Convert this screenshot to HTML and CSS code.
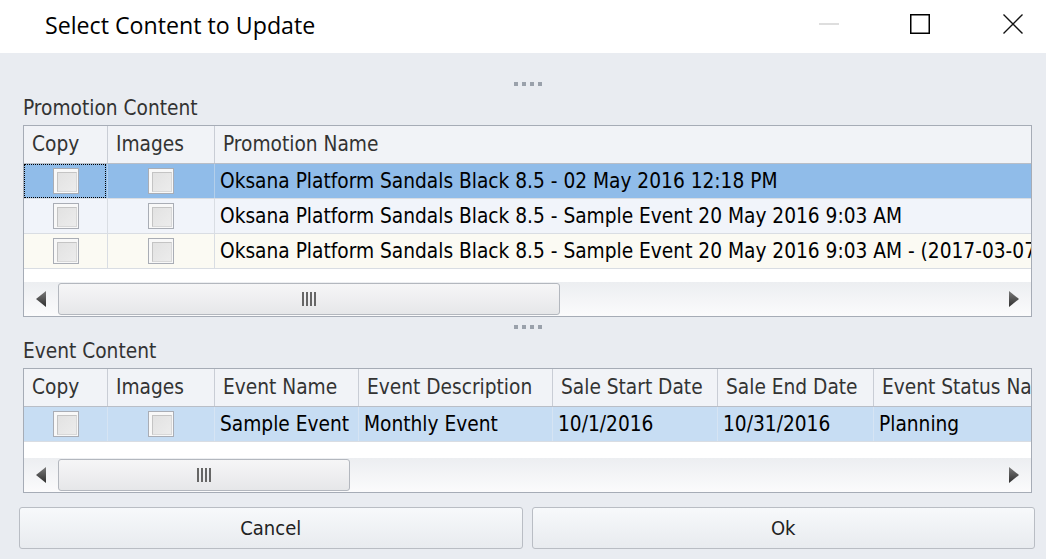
FILE: index.html
```html
<!DOCTYPE html>
<html>
<head>
<meta charset="utf-8">
<title>Select Content to Update</title>
<link rel="stylesheet" href="styles.css">
</head>
<body>
<header class="titlebar">
  <div class="title">Select Content to Update</div>
  <div class="controls">
    <svg class="ctl" viewBox="0 0 20 20"><line x1="0" y1="10" x2="20" y2="10" stroke="#c9c9c9" stroke-width="1.2"/></svg>
    <svg class="ctl" viewBox="0 0 20 20"><rect x="0.75" y="0.75" width="18.5" height="18.5" fill="none" stroke="#000" stroke-width="1.5"/></svg>
    <svg class="ctl ctl-close" viewBox="0 0 20 20"><path d="M0.5 0.5 L19.5 19.5 M19.5 0.5 L0.5 19.5" stroke="#111" stroke-width="1.4" fill="none"/></svg>
  </div>
</header>
<main class="content">
  <div class="grip grip-top"><i></i><i></i><i></i><i></i></div>
  <div class="label">Promotion Content</div>
  <div class="grid grid-promo">
    <div class="row head">
      <div class="cell c-copy">Copy</div>
      <div class="cell c-img">Images</div>
      <div class="cell last">Promotion Name</div>
    </div>
    <div class="row sel">
      <div class="cell c-copy box focus"><span class="chk"></span></div>
      <div class="cell c-img box"><span class="chk"></span></div>
      <div class="cell last">Oksana Platform Sandals Black 8.5 - 02 May 2016 12:18 PM</div>
    </div>
    <div class="row alt">
      <div class="cell c-copy box"><span class="chk"></span></div>
      <div class="cell c-img box"><span class="chk"></span></div>
      <div class="cell last">Oksana Platform Sandals Black 8.5 - Sample Event 20 May 2016 9:03 AM</div>
    </div>
    <div class="row cream">
      <div class="cell c-copy box"><span class="chk"></span></div>
      <div class="cell c-img box"><span class="chk"></span></div>
      <div class="cell last">Oksana Platform Sandals Black 8.5 - Sample Event 20 May 2016 9:03 AM - (2017-03-07)</div>
    </div>
    <div class="filler"></div>
    <div class="hscroll">
      <div class="sbtn"><svg viewBox="0 0 10 16"><defs><linearGradient id="ga" x1="0" y1="0" x2="0" y2="1"><stop offset="0" stop-color="#7a7a7a"/><stop offset="1" stop-color="#2e2e2e"/></linearGradient></defs><polygon points="10,0 10,16 0,8" fill="url(#ga)"/></svg></div>
      <div class="track"><div class="thumb thumb-promo"><i></i><i></i><i></i><i></i></div></div>
      <div class="sbtn"><svg viewBox="0 0 10 16"><polygon points="0,0 10,8 0,16" fill="url(#ga)"/></svg></div>
    </div>
  </div>

  <div class="grip grip-mid"><i></i><i></i><i></i><i></i></div>
  <div class="label">Event Content</div>
  <div class="grid grid-event">
    <div class="row head">
      <div class="cell c-copy">Copy</div>
      <div class="cell c-img">Images</div>
      <div class="cell c-ename">Event Name</div>
      <div class="cell c-edesc">Event Description</div>
      <div class="cell c-start">Sale Start Date</div>
      <div class="cell c-end">Sale End Date</div>
      <div class="cell last">Event Status Name</div>
    </div>
    <div class="row evsel">
      <div class="cell c-copy box"><span class="chk"></span></div>
      <div class="cell c-img box"><span class="chk"></span></div>
      <div class="cell c-ename">Sample Event</div>
      <div class="cell c-edesc">Monthly Event</div>
      <div class="cell c-start">10/1/2016</div>
      <div class="cell c-end">10/31/2016</div>
      <div class="cell last">Planning</div>
    </div>
    <div class="filler"></div>
    <div class="hscroll">
      <div class="sbtn"><svg viewBox="0 0 10 16"><polygon points="10,0 10,16 0,8" fill="url(#ga)"/></svg></div>
      <div class="track"><div class="thumb thumb-event"><i></i><i></i><i></i><i></i></div></div>
      <div class="sbtn"><svg viewBox="0 0 10 16"><polygon points="0,0 10,8 0,16" fill="url(#ga)"/></svg></div>
    </div>
  </div>

  <div class="actions">
    <button class="btn">Cancel</button>
    <button class="btn">Ok</button>
  </div>
</main>
</body>
</html>
```
FILE: styles.css
```css
* { box-sizing: border-box; }
html, body { margin: 0; padding: 0; }
body {
  width: 1046px;
  height: 559px;
  overflow: hidden;
  background: #e9ecf1;
  font-family: "DejaVu Sans Condensed", "DejaVu Sans", sans-serif;
  font-size: 20.7px;
  color: #000;
}

/* title bar */
.titlebar {
  height: 53px;
  background: #fff;
  display: flex;
}
.title {
  padding-left: 45px;
  font-family: "Open Sans", "Noto Sans", sans-serif;
  font-size: 23.2px;
  line-height: 51px;
  color: #000;
}
.controls {
  margin-left: auto;
  display: flex;
  align-items: flex-start;
  gap: 71px;
  padding: 14px 23px 0 0;
}
.ctl { display: block; width: 20px; height: 20px; }
.ctl-close { margin-left: 2px; }

/* content */
.content { padding: 0 14px 0 23px; }

.grip { display: flex; justify-content: center; gap: 4px; }
.grip i { display: block; width: 4px; height: 4px; background: #9aa1ab; }
.grip-top { height: 42px; padding-top: 29px; }
.grip-mid { height: 21px; padding-top: 8px; }

.label {
  height: 30px;
  line-height: 26px;
  color: #333;
}

/* grids */
.grid {
  border: 1px solid #a6acb6;
  background: #fff;
  display: flex;
  flex-direction: column;
  overflow: hidden;
}
.grid-promo { height: 192px; }
.grid-event { height: 125px; }

.row {
  display: flex;
  flex: none;
  height: 35px;
  line-height: 34px;
  border-bottom: 1px solid #d9dde3;
  white-space: nowrap;
}
.row.head {
  height: 38px;
  line-height: 37px;
  background: #f1f3f7;
  border-bottom-color: #b9bec7;
  color: #333;
}
.cell {
  flex: none;
  overflow: hidden;
  padding-left: 5px;
  border-right: 1px solid #d9dde3;
}
.head .cell { padding-left: 8px; border-right-color: #c9cdd5; }
.cell.last { flex: 1; border-right: 0; }

.c-copy { width: 84px; }
.c-img { width: 107px; }
.c-ename { width: 144px; }
.c-edesc { width: 194px; }
.c-start { width: 165px; }
.c-end { width: 156px; }

.row.sel { background: #90bce9; }
.row.sel .cell { border-right-color: #b4cfea; }
.row.alt { background: #f1f4fa; }
.row.cream { background: #fbfaf3; }
.row.evsel { background: #c7ddf3; }
.row.evsel .cell { border-right-color: #d6e4f3; }

.cell.box {
  padding: 0;
  display: flex;
  align-items: center;
  justify-content: center;
}
.chk {
  display: block;
  width: 26px;
  height: 26px;
  border: 1px solid #a9adb5;
  background: #f8f8f8;
  padding: 3px;
}
.chk::before {
  content: "";
  display: block;
  width: 100%;
  height: 100%;
  border: 1px solid #c4c4c4;
  border-right-color: #d8d8d8;
  border-bottom-color: #d8d8d8;
  background: linear-gradient(135deg, #e2e2e2, #ececec);
}
.focus { position: relative; }
.focus::after {
  content: "";
  position: absolute;
  top: 0; left: 0; right: 1px; bottom: 0;
  border: 1px dotted #000;
}

.filler { flex: 1; }

.hscroll {
  flex: none;
  height: 34px;
  display: flex;
  background: linear-gradient(#eceef1, #fbfbfc);
}
.sbtn {
  width: 34px;
  display: flex;
  align-items: center;
  justify-content: center;
}
.sbtn svg { display: block; width: 10px; height: 16px; }
.track { flex: 1; padding-top: 1px; }
.thumb {
  height: 32px;
  border: 1px solid #b3b7be;
  border-radius: 3px;
  background: linear-gradient(#f6f6f7, #e6e7e9);
  display: flex;
  align-items: center;
  justify-content: center;
  gap: 2px;
}
.thumb i { display: block; width: 2px; height: 14px; background: #666; }
.thumb-promo { width: 502px; }
.thumb-event { width: 292px; }

/* buttons */
.actions {
  display: flex;
  gap: 9px;
  margin: 14px -3px 0 -4px;
}
.btn {
  flex: 1;
  height: 42px;
  border: 1px solid #b9bdc4;
  border-radius: 3px;
  background: linear-gradient(#f7f9fb, #e8ebef);
  font-family: "DejaVu Sans Condensed", "DejaVu Sans", sans-serif;
  font-size: 20px;
  color: #222;
  padding: 0;
}
```
